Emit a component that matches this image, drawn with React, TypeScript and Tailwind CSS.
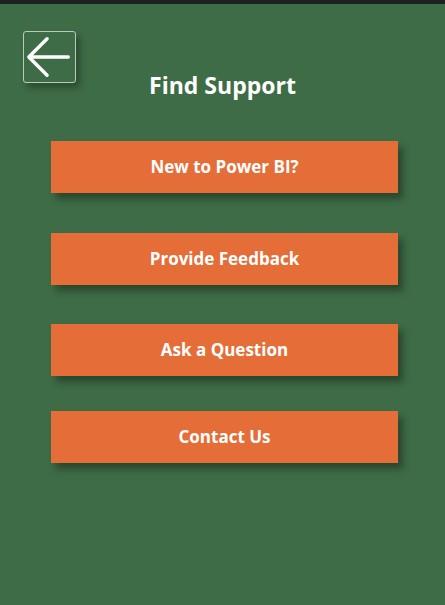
const items = ["New to Power BI?", "Provide Feedback", "Ask a Question", "Contact Us"];
const gaps = ["mt-[41px]", "mt-[40px]", "mt-[39px]", "mt-[35px]"];

export default function App() {
  return (
    <div className="w-[445px] h-[605px] bg-[#3e6c46] font-['Open_Sans',sans-serif] overflow-hidden">
      <div className="h-[4px] bg-[#1f2023]" />
      <div className="grid grid-cols-[1fr_auto_1fr] items-start">
        <button className="ml-[23px] mt-[27px] w-[53px] h-[52px] rounded-[3px] border border-[#b9c9bc] shadow-[4px_5px_6px_rgba(0,0,0,0.3)] flex items-center justify-center">
          <svg width="53" height="52" viewBox="0 0 53 52" fill="none">
            <path d="M5 26H46M24 7L5 26L24 45" stroke="white" strokeWidth="3.5" strokeLinecap="round" strokeLinejoin="round" />
          </svg>
        </button>
        <h1 className="mt-[66px] text-[23px] leading-[30px] font-bold text-white">Find Support</h1>
        <div />
      </div>
      <div className="flex flex-col items-center">
        {items.map((label, i) => (
          <button
            key={label}
            className={`${gaps[i]} ml-[4px] w-[347px] h-[52px] bg-[#e56d38] text-white text-[17px] font-bold shadow-[5px_6px_7px_rgba(0,0,0,0.35)]`}
          >
            {label}
          </button>
        ))}
      </div>
    </div>
  );
}
